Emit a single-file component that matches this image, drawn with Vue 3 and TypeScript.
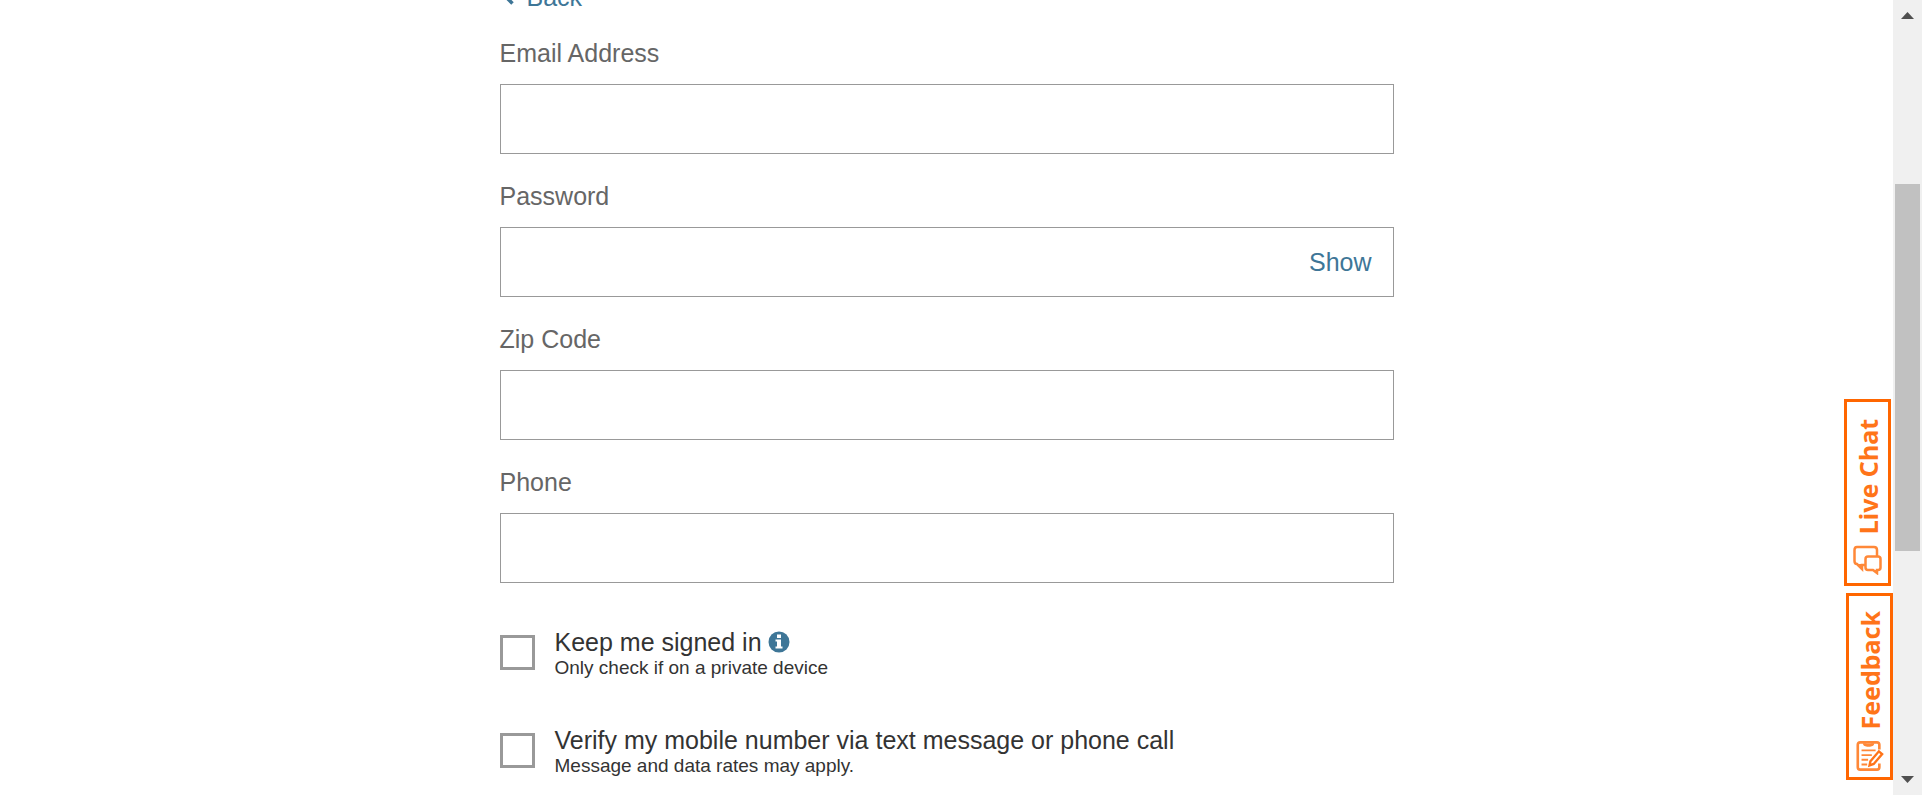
<script setup lang="ts">
import { ref } from 'vue'

interface Field {
  id: string
  label: string
  type: string
}

interface Choice {
  id: string
  label: string
  note: string
  info: boolean
}

const fields: Field[] = [
  { id: 'email', label: 'Email Address', type: 'email' },
  { id: 'password', label: 'Password', type: 'password' },
  { id: 'zip', label: 'Zip Code', type: 'text' },
  { id: 'phone', label: 'Phone', type: 'tel' },
]

const choices: Choice[] = [
  { id: 'keep', label: 'Keep me signed in', note: 'Only check if on a private device', info: true },
  {
    id: 'verify',
    label: 'Verify my mobile number via text message or phone call',
    note: 'Message and data rates may apply.',
    info: false,
  },
]

const values = ref<Record<string, string>>({ email: '', password: '', zip: '', phone: '' })
const checked = ref<Record<string, boolean>>({ keep: false, verify: false })
const visible = ref(false)

function inputType(field: Field): string {
  return field.id === 'password' && visible.value ? 'text' : field.type
}
</script>

<template>
  <div class="page">
    <main class="content">
      <form class="form" @submit.prevent>
        <a class="back" href="#">
          <svg class="chevron" viewBox="0 0 10 16" aria-hidden="true">
            <path d="M8.500 1.500 2 8l6.500 6.500" fill="none" stroke="currentColor" stroke-width="3.500" />
          </svg>
          Back
        </a>

        <div v-for="field in fields" :key="field.id" class="field">
          <label class="label" :for="field.id">{{ field.label }}</label>
          <div class="box">
            <input :id="field.id" v-model="values[field.id]" class="input" :type="inputType(field)" />
            <button v-if="field.id === 'password'" type="button" class="show" @click="visible = !visible">
              {{ visible ? 'Hide' : 'Show' }}
            </button>
          </div>
        </div>

        <div class="choices">
          <div v-for="choice in choices" :key="choice.id" class="choice">
            <input :id="choice.id" v-model="checked[choice.id]" class="tick" type="checkbox" />
            <div class="words">
              <div class="line">
                <label :for="choice.id">{{ choice.label }}</label>
                <button v-if="choice.info" type="button" class="info" aria-label="More information">
                  <svg viewBox="0 0 22 22" aria-hidden="true">
                    <circle cx="11" cy="11" r="10.500" fill="#3e7697" />
                    <path d="M9 3.500h4v3.500H9zM7.500 8.500H13v7h1.500v2h-7v-2H9v-5H7.500z" fill="#fff" />
                  </svg>
                </button>
              </div>
              <p class="note">{{ choice.note }}</p>
            </div>
          </div>
        </div>
      </form>
    </main>

    <div class="scrollbar" aria-hidden="true">
      <svg class="arrow" viewBox="0 0 13 7"><path d="M6.500 0 13 7H0z" fill="#505050" /></svg>
      <div class="track"><div class="thumb"></div></div>
      <svg class="arrow" viewBox="0 0 13 7"><path d="M0 0h13L6.500 7z" fill="#505050" /></svg>
    </div>

    <div class="tabs">
      <button type="button" class="tab chat">
        <svg class="glyph" viewBox="0 0 29 30" fill="none" stroke="#ff8838" stroke-width="2.500" aria-hidden="true">
          <path d="M24 11V5q0-3-3-3H4Q1.500 2 1.500 5v11q0 3 2.500 3l5 5v-4h3" />
          <path d="M15 11.500h10q2.500 0 2.500 2.500v8.500q0 2.500-2.500 2.500h-1v3l-4-3h-5q-2.500 0-2.500-2.500V14q0-2.500 2.500-2.500z" />
          <path d="m5 19 4 4v-4zM20 25l4 3v-3z" fill="#ff8838" stroke="none" />
        </svg>
        <span class="tab-text">Live Chat</span>
      </button>
      <button type="button" class="tab feedback">
        <svg class="glyph" viewBox="0 0 29 32" fill="none" stroke="#ff8838" stroke-width="2.800" aria-hidden="true">
          <path d="M25 9V4q0-2.500-2.500-2.500h-18Q2 1.500 2 4v24q0 2.500 2.500 2.500h18Q25 30.500 25 28v-4" />
          <path d="M9 2.500q0 2 3 2h3q3 0 3-2" stroke-width="3" />
          <path d="M6 10h15M6 15h11M6 20h7M6 25h6" stroke-width="2" />
          <path d="m15.500 21.500 9-10.500 3.500 3-9 10.500-4.500 1.500z" stroke="#ff7419" stroke-width="2.500" />
        </svg>
        <span class="tab-text">Feedback</span>
      </button>
    </div>
  </div>
</template>

<style>
body {
  margin: 0;
  background: #fff;
}
</style>

<style scoped>
* {
  box-sizing: border-box;
}

.page {
  position: relative;
  display: flex;
  height: 100vh;
  overflow: hidden;
  font-family: 'Liberation Sans', Arial, sans-serif;
  font-size: 25px;
  line-height: 30px;
  color: #333;
}

.content {
  flex: 1;
  min-width: 0;
}

.form {
  display: flex;
  flex-direction: column;
  max-width: 894px;
  margin: -18px auto 0;
}

.back {
  display: flex;
  align-items: center;
  align-self: flex-start;
  gap: 13px;
  padding-left: 4px;
  color: #3e7697;
  text-decoration: none;
}

.chevron {
  width: 10px;
  height: 16px;
}

.field {
  display: flex;
  flex-direction: column;
  gap: 16px;
  padding-top: 27px;
}

.back + .field {
  padding-top: 26px;
}

.label {
  color: #666;
}

.box {
  display: flex;
  height: 70px;
  border: 1px solid #999;
}

.input {
  flex: 1;
  min-width: 0;
  padding: 0 20px;
  border: 0;
  outline: 0;
  background: transparent;
  font: inherit;
  color: inherit;
}

.show {
  padding: 0 21px;
  border: 0;
  background: transparent;
  font: inherit;
  color: #3e7697;
  cursor: pointer;
}

.choices {
  display: flex;
  flex-direction: column;
  gap: 46px;
  padding-top: 44px;
}

.choice {
  display: flex;
  align-items: flex-start;
  gap: 20px;
}

.tick {
  width: 35px;
  height: 35px;
  margin: 8px 0 0;
  border: 3px solid #999;
  background: #fff;
  appearance: none;
}

.tick:checked {
  background: #3e7697;
}

.line {
  display: flex;
  align-items: center;
  gap: 6px;
}

.info {
  width: 22px;
  height: 22px;
  padding: 0;
  border: 0;
  background: transparent;
}

.info svg {
  display: block;
}

.note {
  margin: 0;
  font-size: 19px;
  line-height: 22px;
}

.scrollbar {
  display: flex;
  flex-direction: column;
  align-items: center;
  width: 29px;
  padding: 12px 2px;
  background: #f0f0f0;
}

.arrow {
  width: 13px;
  height: 7px;
}

.track {
  flex: 1;
  align-self: stretch;
  padding: 165px 0 0;
}

.thumb {
  height: 62%;
  background: #c1c1c1;
}

.tabs {
  position: absolute;
  right: 29px;
  bottom: 15px;
  display: flex;
  flex-direction: column;
  gap: 7px;
}

.tab {
  display: flex;
  flex-direction: column-reverse;
  align-items: center;
  justify-content: space-between;
  width: 47px;
  height: 187px;
  border: 3px solid #f60;
  background: #fff;
  color: #ff7419;
  font: 700 25px/30px 'Noto Sans', 'Open Sans', sans-serif;
}

.chat {
  margin-right: 2px;
  padding: 17px 5px 8px;
}

.feedback {
  margin-left: 2px;
  padding: 15px 5px 6px;
}

.glyph {
  flex: none;
  width: 29px;
  height: 30px;
}

.tab-text {
  writing-mode: vertical-rl;
  transform: rotate(180deg);
}
</style>
